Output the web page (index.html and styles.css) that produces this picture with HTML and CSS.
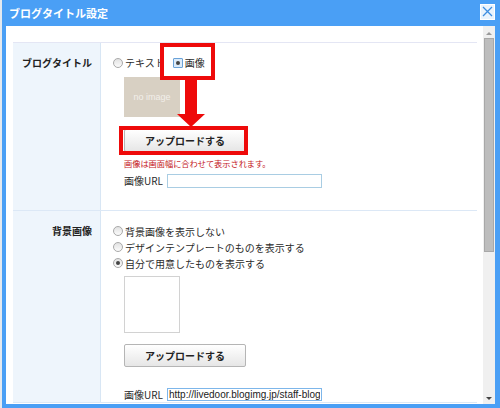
FILE: index.html
```html
<!DOCTYPE html>
<html lang="ja">
<head>
    <meta charset="UTF-8">
    <title>ブログタイトル設定</title>
    <link rel="stylesheet" href="styles.css">
</head>
<body>
    <div class="dialog">
        <div class="dialog-title">
            <h1>ブログタイトル設定</h1>
            <span class="close">
                <svg width="11" height="11" viewBox="0 0 11 11"><path d="M1 1L10 10M10 1L1 10" stroke="#3d8de0" stroke-width="1.3" fill="none"/></svg>
            </span>
        </div>
        <div class="dialog-body">
            <div class="content">
                <div class="setting-row first">
                    <div class="setting-label">ブログタイトル</div>
                    <div class="setting-value">
                        <div class="radio-line">
                            <span class="radio"></span>
                            <span class="radio-text">テキスト</span>
                            <span class="radio checked focus"></span>
                            <span class="radio-text">画像</span>
                        </div>
                        <div class="indent">
                            <div class="no-image">no image</div>
                            <button class="upload up-1">アップロードする</button>
                            <p class="note">画像は画面幅に合わせて表示されます。</p>
                            <div class="url-line">
                                <span>画像URL</span>
                                <input type="text" class="url-input">
                            </div>
                        </div>

                        <!-- 赤枠と矢印の注釈 -->
                        <div class="mark mark-radio"></div>
                        <svg class="arrow" width="30" height="47" viewBox="0 0 30 47">
                            <polygon points="9,0 21,0 21,34 29,34 15,47 1,34 9,34" fill="#ee0a0a"/>
                        </svg>
                        <div class="mark mark-button"></div>
                    </div>
                </div>

                <div class="setting-row">
                    <div class="setting-label">背景画像</div>
                    <div class="setting-value">
                        <div class="radio-line"><span class="radio"></span><span class="radio-text">背景画像を表示しない</span></div>
                        <div class="radio-line"><span class="radio"></span><span class="radio-text">デザインテンプレートのものを表示する</span></div>
                        <div class="radio-line"><span class="radio checked"></span><span class="radio-text">自分で用意したものを表示する</span></div>
                        <div class="indent">
                            <div class="empty-image"></div>
                            <button class="upload up-2">アップロードする</button>
                            <div class="url-line url-2">
                                <span>画像URL</span>
                                <input type="text" class="url-input active" value="http://livedoor.blogimg.jp/staff-blog">
                            </div>
                        </div>
                    </div>
                </div>
            </div>
            <div class="scrollbar">
                <span class="arrow-up"></span>
                <span class="thumb"></span>
                <span class="arrow-down"></span>
            </div>
        </div>
    </div>
</body>
</html>
```

FILE: styles.css
```css
* {
    margin: 0;
    padding: 0;
    box-sizing: border-box;
}

body {
    width: 500px;
    height: 408px;
    overflow: hidden;
    background-color: #e4e9ef;
    font-family: "Noto Sans CJK JP", sans-serif;
    color: #333;
}

.dialog {
    margin-left: 2px;
    width: 498px;
    height: 408px;
    background-color: #4a9ff5;
    padding: 0 5px 4px 4px;
    display: flex;
    flex-direction: column;
}

.dialog-title {
    height: 26px;
    display: flex;
    align-items: center;
    justify-content: space-between;
    padding-left: 3px;
}

.dialog-title h1 {
    font-size: 11px;
    font-weight: bold;
    color: #fff;
}

.close {
    width: 15px;
    height: 16px;
    border: 1px solid #fff;
    background-color: #e9f3fd;
    display: flex;
    align-items: center;
    justify-content: center;
    margin-bottom: 3px;
}

.dialog-body {
    flex: 1;
    background-color: #fff;
    display: flex;
    overflow: hidden;
}

.content {
    flex: 1;
    padding: 16px 6px 0 7px;
}

.setting-row {
    display: grid;
    grid-template-columns: 88px 1fr;
    border-bottom: 1px solid #dce8f6;
}

.setting-row.first {
    border-top: 1px solid #e4e6f4;
}

.setting-label {
    background-color: #eef5fc;
    border-right: 1px solid #d8e6f4;
    text-align: right;
    padding: 12px 8px 0 0;
    font-size: 10px;
    font-weight: bold;
    line-height: 15px;
    color: #222;
}

.setting-value {
    position: relative;
    padding: 12px 0 0 12px;
    font-size: 10px;
    color: #2b2b2b;
}

.first .setting-value {
    padding-bottom: 22px;
}

.radio-line {
    display: flex;
    align-items: center;
    height: 16px;
}

.first .radio-line {
    height: 15px;
}

.radio {
    width: 10px;
    height: 10px;
    border-radius: 50%;
    border: 1px solid #a9a9a9;
    background: linear-gradient(#e2e2e2, #fbfbfb);
    margin-right: 2px;
    position: relative;
}

.radio.checked::after {
    content: "";
    position: absolute;
    left: 2px;
    top: 2px;
    width: 4px;
    height: 4px;
    border-radius: 50%;
    background-color: #444;
}

.radio.focus {
    border-radius: 1px;
    border-color: #6aa2d8;
    background: #dcebf9;
    margin-left: 8px;
}

.radio-text {
    line-height: 15px;
}

.indent {
    padding-left: 11px;
}

.no-image {
    margin-top: 7px;
    width: 56px;
    height: 40px;
    background-color: #d8d0c3;
    color: #f2efea;
    font-family: "Liberation Sans", sans-serif;
    font-size: 9px;
    display: flex;
    align-items: center;
    justify-content: center;
}

.upload {
    display: block;
    width: 122px;
    height: 23px;
    border: 1px solid #b5b5b5;
    border-radius: 2px;
    background: linear-gradient(#ffffff, #e6e6e6);
    font-family: "Noto Sans CJK JP", sans-serif;
    font-size: 10px;
    font-weight: bold;
    color: #222;
}

.up-1 {
    margin-top: 12px;
}

.note {
    margin-top: 6px;
    font-size: 8.2px;
    line-height: 10px;
    color: #c4161c;
}

.url-line {
    display: flex;
    align-items: center;
    gap: 4px;
    margin-top: 5px;
}

.url-input {
    width: 155px;
    height: 14px;
    border: 1px solid #a9cde3;
    font-family: "Liberation Sans", sans-serif;
    font-size: 10px;
    color: #222;
    padding: 0 1px;
    outline: none;
}

.url-input.active {
    height: 13px;
    border-color: #7db6ea;
}

.empty-image {
    margin-top: 5px;
    width: 56px;
    height: 57px;
    border: 1px solid #d2d2d2;
}

.up-2 {
    margin-top: 11px;
}

.url-2 {
    margin-top: 20px;
}

/* 注釈 */
.mark {
    position: absolute;
    border: 4px solid #ee0a0a;
}

.mark-radio {
    left: 59px;
    top: 0;
    width: 55px;
    height: 37px;
}

.mark-button {
    left: 18px;
    top: 83px;
    width: 129px;
    height: 29px;
}

.arrow {
    position: absolute;
    left: 75px;
    top: 37px;
}

.scrollbar {
    width: 12px;
    background-color: #f0f0f0;
    display: flex;
    flex-direction: column;
    align-items: center;
    padding: 6px 0 4px;
}

.arrow-up,
.arrow-down {
    width: 0;
    height: 0;
    border-left: 3px solid transparent;
    border-right: 3px solid transparent;
}

.arrow-up {
    border-bottom: 3px solid #9a9a9a;
}

.arrow-down {
    margin-top: auto;
    border-top: 3px solid #444;
}

.thumb {
    margin-top: 3px;
    width: 10px;
    height: 214px;
    background-color: #bdbdbd;
    border: 1px solid #a8a8a8;
}
```
